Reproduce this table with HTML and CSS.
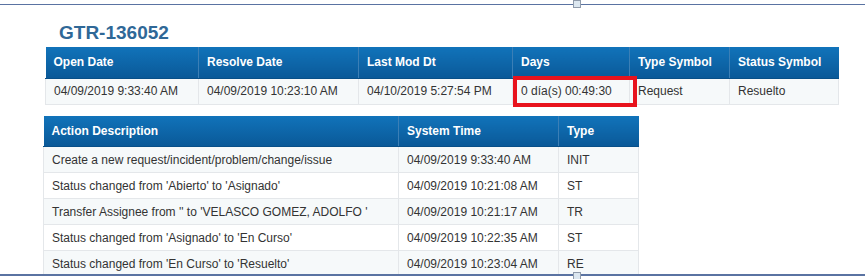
FILE: index.html
```html
<!DOCTYPE html>
<html>
<head>
<meta charset="utf-8">
<link rel="stylesheet" href="styles.css">
</head>
<body>
<div class="frame">
  <span class="handle handle-top"></span>
  <h1 class="title">GTR-136052</h1>
  <table class="grid grid-summary">
    <colgroup>
      <col class="c153"><col class="c160"><col class="c154"><col class="c117"><col class="c100"><col class="c109">
    </colgroup>
    <thead>
      <tr><th>Open Date</th><th>Resolve Date</th><th>Last Mod Dt</th><th>Days</th><th>Type Symbol</th><th>Status Symbol</th></tr>
    </thead>
    <tbody>
      <tr class="alt"><td>04/09/2019 9:33:40 AM</td><td>04/09/2019 10:23:10 AM</td><td>04/10/2019 5:27:54 PM</td><td>0 día(s) 00:49:30</td><td>Request</td><td>Resuelto</td></tr>
    </tbody>
  </table>
  <table class="grid grid-log">
    <colgroup>
      <col class="c355"><col class="c160"><col class="c80">
    </colgroup>
    <thead>
      <tr><th>Action Description</th><th>System Time</th><th>Type</th></tr>
    </thead>
    <tbody>
      <tr class="alt"><td>Create a new request/incident/problem/change/issue</td><td>04/09/2019 9:33:40 AM</td><td>INIT</td></tr>
      <tr><td>Status changed from 'Abierto' to 'Asignado'</td><td>04/09/2019 10:21:08 AM</td><td>ST</td></tr>
      <tr class="alt"><td>Transfer Assignee from '' to 'VELASCO GOMEZ, ADOLFO '</td><td>04/09/2019 10:21:17 AM</td><td>TR</td></tr>
      <tr><td>Status changed from 'Asignado' to 'En Curso'</td><td>04/09/2019 10:22:35 AM</td><td>ST</td></tr>
      <tr class="alt"><td>Status changed from 'En Curso' to 'Resuelto'</td><td>04/09/2019 10:23:04 AM</td><td>RE</td></tr>
    </tbody>
  </table>
</div>
<span class="handle handle-bottom"></span>
<div class="highlight"></div>
</body>
</html>
```

FILE: styles.css
```css
html, body {
  margin: 0;
  padding: 0;
  background: #ffffff;
  font-family: "Liberation Sans", Arial, sans-serif;
}
body {
  width: 865px;
  height: 279px;
  overflow: hidden;
  position: relative;
}
.frame {
  margin-top: 4px;
  border-top: 1px solid #5a73a2;
  border-bottom: 2px solid #5a73a2;
  height: 269px;
  overflow: hidden;
  position: relative;
  padding-left: 45px;
  box-sizing: content-box;
}
.title {
  margin: 17px 0 3px 14px;
  font-size: 19px;
  line-height: 22px;
  font-weight: bold;
  color: #2f6897;
}
.grid {
  border-collapse: collapse;
  table-layout: fixed;
  font-size: 12px;
  color: #333333;
}
.grid th {
  height: 31px;
  padding: 0 8px;
  text-align: left;
  font-weight: bold;
  color: #ffffff;
  background: linear-gradient(#1173ba, #0a5998);
  border-left: 1px solid #3b7fb6;
  border-bottom: 1px solid #084f88;
  box-sizing: border-box;
  white-space: nowrap;
}
.grid th:first-child { border-left: none; }
.grid td {
  padding: 0 8px;
  border: 1px solid #e4e7ea;
  white-space: nowrap;
  overflow: hidden;
  background: #ffffff;
}
.grid tr.alt td { background: #f6f9fa; }
.grid-summary td { height: 25px; }
.grid-log {
  margin: 11px 0 0 -2px;
}
.grid-log td { height: 25px; }
.c153 { width: 153px; }
.c160 { width: 160px; }
.c154 { width: 154px; }
.c117 { width: 117px; }
.c100 { width: 100px; }
.c109 { width: 109px; }
.c355 { width: 355px; }
.c80 { width: 80px; }
.handle {
  position: absolute;
  width: 6px;
  height: 6px;
  border: 1px solid #8f9bab;
  background: #dce7f0;
  left: 573px;
  z-index: 2;
}
.handle-top { top: 0; position: fixed; }
.handle-bottom { top: 272px; }
.highlight {
  position: absolute;
  left: 513px;
  top: 76px;
  width: 116px;
  height: 23px;
  border: 4px solid #e8131d;
}
```
